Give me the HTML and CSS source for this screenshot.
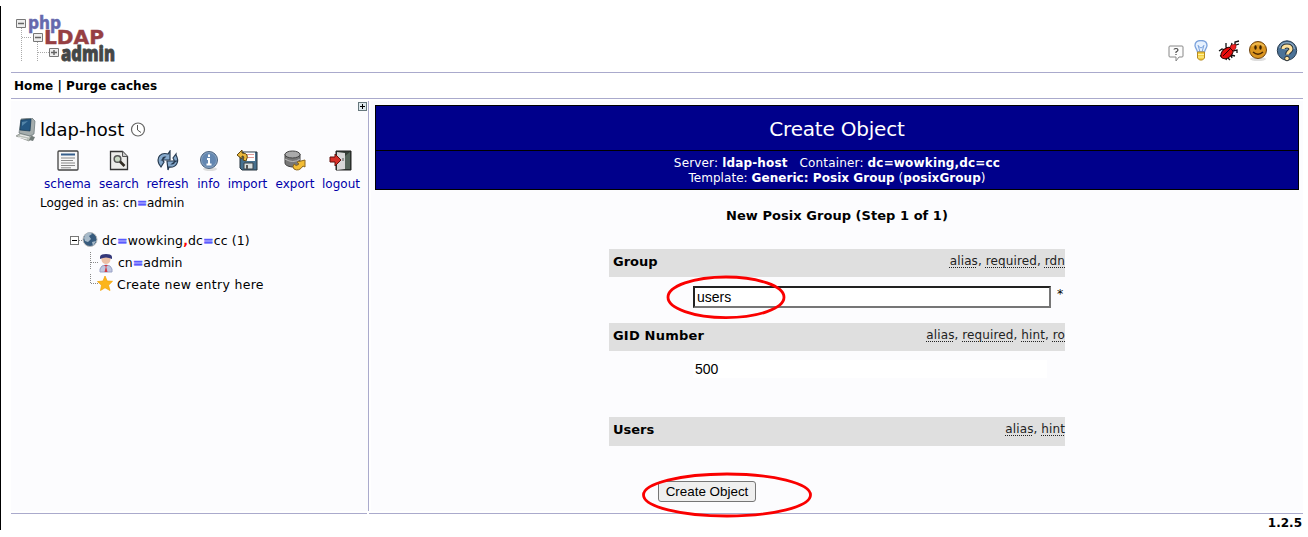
FILE: index.html
```html
<!DOCTYPE html>
<html lang="en">
<head>
<meta charset="utf-8">
<title>phpLDAPadmin</title>
<link rel="stylesheet" href="styles.css">
</head>
<body>
<div class="page">
  <header class="head">
    <svg class="logo" width="104" height="52" viewBox="0 0 104 52">
      <g stroke="#aaa" stroke-dasharray="1 1" fill="none"><path d="M6.500 15V48M7 24.500H17M22.500 29V48M23 39.500H34"/></g>
      <g class="logo-text">
        <text x="13" y="16" font-size="18" textLength="33" lengthAdjust="spacingAndGlyphs" fill="#6669ad" stroke="#6669ad" stroke-width=".5">php</text>
        <text x="29" y="31" font-size="20" textLength="60" lengthAdjust="spacingAndGlyphs" fill="#963f43" stroke="#963f43" stroke-width=".4">LDAP</text>
        <text class="logo-admin" x="46" y="48" font-size="21" textLength="54" lengthAdjust="spacingAndGlyphs" fill="#444747" stroke="#444747" stroke-width=".8">admin</text>
      </g>
      <g fill="#eee" stroke="#777"><path d="M1.500 6.500h9v8h-9zM18.500 20.500h9v8h-9zM34.500 35.500h9v8h-9z"/></g>
      <path d="M3 10.500h6M20 24.500h6M36 39.500h6M39 37v5" stroke="#666" stroke-width="1.500"/>
    </svg>
    <nav class="tools">
      <svg width="18" height="22" viewBox="0 0 18 22"><path d="M3 6h12q1 0 1 1v9q0 1-1 1h-3l-3 4v-4H3q-1 0-1-1V7q0-1 1-1z" fill="#fcfcfc" stroke="#888"/><path d="M7 9.500q0-1 2-1t2 1.500q0 1-2 2v1M9 14v1" fill="none" stroke="#444" stroke-width="1.200"/></svg>
      <svg width="16" height="22" viewBox="0 0 16 22"><path d="M4.500 12C4 9 2 8 2 5.500Q2 .5 8 .5t6 5C14 8 12 9 11.500 12z" fill="#e6f1ff" stroke="#7ba2dc" stroke-width="1.300"/><path d="M5 5l2 7M11 5l-2 7M5 6l3 2 3-2" stroke="#7ba2dc" fill="none"/><path d="M4.500 12h7v6l-2 2h-3l-2-2z" fill="#f4cf3f" stroke="#b58a22"/><path d="M5 14.500h6M5 17h6" stroke="#fff1a0"/></svg>
      <svg width="22" height="22" viewBox="0 0 22 22"><g stroke="#111" stroke-width="1.300" fill="none"><path d="M1 11l3-2 3 1M8 3v4l2 3M14 3l-1 4M17 5V2l4-1M18 5l3-1M14 11l5-1v3M2 16l4-1M8 20l1-3 3 3M14 18l-1-3 4 1"/></g><ellipse cx="9" cy="13" rx="7" ry="4.700" transform="rotate(-40 9 13)" fill="#e80d0d" stroke="#300"/><path d="M13 5l5-1v4l-3 3-3-3z" fill="#ee2020" stroke="#500" stroke-width=".5"/><path d="M5 16L12 9M11 7l4 4" stroke="#300"/></svg>
      <svg width="20" height="22" viewBox="0 0 20 22"><ellipse cx="10" cy="19" rx="8" ry="2" fill="#ddd"/><circle cx="10" cy="10" r="8.500" fill="#dc9620" stroke="#704511"/><path d="M4 6q6-5 12 0" stroke="#eeb84d" stroke-width="2" fill="none"/><path d="M5 12q5 4.500 10 0" fill="none" stroke="#4b2700" stroke-width="1.500"/><ellipse cx="7.500" cy="7.500" rx="1.200" ry="2.300" fill="#3b2100"/><ellipse cx="12.500" cy="7.500" rx="1.200" ry="2.300" fill="#3b2100"/></svg>
      <svg width="22" height="22" viewBox="0 0 22 22"><circle cx="11" cy="10.500" r="9.700" fill="#4b7297" stroke="#26394c"/><path d="M3 8q2-6 8-6 7 0 8 7-8 2-16-1z" fill="#91acc4"/><path d="M7 9q0-3 4-3t4 3.200c0 2-3.500 2.500-3.500 5.300" fill="none" stroke="#26303a" stroke-width="5"/><path d="M7 9q0-3 4-3t4 3.200c0 2-3.500 2.500-3.500 5.300" fill="none" stroke="#ffe19b" stroke-width="3"/><circle cx="11" cy="18.500" r="2.300" fill="#ffe19b" stroke="#26303a"/></svg>
    </nav>
  </header>
  <nav class="menu"><span>Home | Purge caches</span></nav>
  <div class="body">
    <aside class="side">
      <div class="expand"><svg width="9" height="9" viewBox="0 0 9 9"><rect x=".5" y=".5" width="8" height="8" fill="#dde8ec" stroke="#66777c"/><path d="M2 4.500h5M4.500 2v5" stroke="#000"/></svg></div>
      <div class="server">
        <svg width="22" height="24" viewBox="0 0 22 24"><path d="M1 18l5-3 12 3-4 5z" fill="#bac0b9" stroke="#858b86" stroke-width=".7"/><path d="M16 18l4 1-2 4-4-1z" fill="#707a78"/><path d="M6 1l11-1 3 3-1 13-4 2-11-3z" fill="#a5adad" stroke="#667276" stroke-width=".7"/><path d="M6 2l10-1-1 12-10-1z" fill="#245782" stroke="#163650" stroke-width=".7"/><path d="M7 4l6-1-6 5z" fill="#5485a8"/><path d="M3 19l9 2M5 17l9 2" stroke="#eee"/></svg>
        <span class="server-name">ldap-host</span>
        <svg width="16" height="16" viewBox="0 0 16 16"><circle cx="8" cy="7.500" r="6.500" fill="#fff" stroke="#666" stroke-width="1.200"/><path d="M7.500 3v5l3.500 2.500" stroke="#555" fill="none"/></svg>
      </div>
      <div class="actions">
        <a class="act schema"><svg width="24" height="22" viewBox="0 0 24 22"><path d="M3 1h18q1 0 1 1v17q0 1-1 1H3q-1 0-1-1V2q0-1 1-1z" fill="#f7f7f7" stroke="#444" stroke-width="1.300"/><path d="M5 4.500h14" stroke="#355e8c" stroke-width="2"/><path d="M5 8h14M5 10.500h12M5 13h14M5 15.500h14M5 17.800h10" stroke="#888"/></svg><span>schema</span></a>
        <a class="act search"><svg width="22" height="22" viewBox="0 0 22 22"><path d="M2.500 1.500h12l5 5v13h-17z" fill="#ececea" stroke="#333" stroke-width="1.300"/><path d="M14.500 1.500v5h5" fill="#ccc" stroke="#555"/><circle cx="9.500" cy="9" r="3.300" fill="#cad8c4" stroke="#555" stroke-width="1.500"/><path d="M12 11.500l4.500 4.500" stroke="#332d24" stroke-width="2.700"/></svg><span>search</span></a>
        <a class="act refresh"><svg width="24" height="22" viewBox="0 0 24 22"><g fill="#86a9cc" stroke="#263a50" stroke-width="1.200"><path d="M3 14C0 7 5 2 12 4l2-3v9H6l3-3C6 7 6 10 8 12l-3 5z"/><path d="M20 5c4 7 0 13-7 12l-1 3-1-9h9l-4 3c3 0 3-3 1-6l3-4z"/></g></svg><span>refresh</span></a>
        <a class="act info"><svg width="22" height="22" viewBox="0 0 22 22"><ellipse cx="12" cy="19" rx="7" ry="2" fill="#ddd"/><circle cx="11" cy="10" r="8.500" fill="#6487b1" stroke="#4f6580"/><circle cx="11" cy="10" r="7.500" fill="none" stroke="#91a9c2" stroke-width=".7"/><path d="M11 4.500v2.500M9 9h2v5M8.500 14.500h5" stroke="#fff" stroke-width="2" fill="none"/></svg><span>info</span></a>
        <a class="act import"><svg width="24" height="22" viewBox="0 0 24 22"><path d="M4 2h17v18H6l-2-2z" fill="#46708e" stroke="#25323c"/><path d="M8 2.500h11V11H8z" fill="#fff"/><path d="M9 4.500h9M9 7.500h9" stroke="#e19c99" stroke-width="1.200"/><path d="M8 13h9v6H8z" fill="#d8dedd" stroke="#39434a"/><path d="M10 15h2v4h-2z" fill="#555"/><path d="M1 5l5-5v3q8 0 4 8l-3-1q2-4-1-4v3z" fill="#eab83b" stroke="#5e4510"/></svg><span>import</span></a>
        <a class="act export"><svg width="24" height="22" viewBox="0 0 24 22"><path d="M2 4v9q0 3 7 4 8 0 8-4V4" fill="#777" stroke="#444"/><ellipse cx="9.500" cy="4.500" rx="7.500" ry="3.500" fill="#aaa" stroke="#444"/><path d="M2 9q8 5 15 0" stroke="#bbb" fill="none"/><path d="M11 14q2 3 5 0l-2-2 8-2v7l-2-1q-4 6-9 3-2-2 0-5z" fill="#f3bd34" stroke="#8b6720"/></svg><span>export</span></a>
        <a class="act logout"><svg width="24" height="22" viewBox="0 0 24 22"><path d="M7 1h15v19H7z" fill="#333c35" stroke="#222"/><path d="M8 2l8 1v16l-8 1z" fill="#d8d8d8"/><path d="M16 19V6l5-4v17z" fill="#55655a"/><path d="M1 7h5V4l6 6-6 6v-4H1z" fill="#d62f28" stroke="#63110d"/><path d="M14 8v3" stroke="#555"/></svg><span>logout</span></a>
      </div>
      <p class="logged">Logged in as: cn<b class="eq">=</b>admin</p>
      <div class="tree">
        <div class="node root"><svg width="29" height="20" viewBox="0 0 29 20"><rect x="1.500" y="6.500" width="8" height="8" fill="#fff" stroke="#777"/><path d="M3 10.500h5" stroke="#000"/><path d="M10 10.500h5" stroke="#888" stroke-dasharray="1 1"/><circle cx="21" cy="9.500" r="7" fill="#375b7d" stroke="#bbb"/><path d="M15 8q1-5 6-6l2 2-3 2 2 3-3 3-3-1zM23 12l4-1-3 5z" fill="#a7bac9"/></svg><span>dc<b class="eq">=</b>wowking<i>,</i>dc<b class="eq">=</b>cc (1)</span></div>
        <div class="node"><svg width="25" height="22" viewBox="0 0 25 22"><path d="M.5 1v18M1 11.500h7" stroke="#888" stroke-dasharray="1 1" fill="none"/><circle cx="16" cy="8.500" r="4.500" fill="#ecc0a6"/><path d="M10 8V6q0-3 6-3t6 3v2q-6-3-12 0z" fill="#343879"/><path d="M10 21v-3q1-4 6-4t6 4v3z" fill="#bfc6df" stroke="#9aa3c6"/><path d="M14 14h4l-2 2zM16 15l1.500 6h-3z" fill="#d43a43"/></svg><span>cn<b class="eq">=</b>admin</span></div>
        <div class="node create"><svg width="25" height="22" viewBox="0 0 25 22"><path d="M.5 1v10M1 10.500h7" stroke="#888" stroke-dasharray="1 1" fill="none"/><path d="M15 3l2.200 5 5.300.3-4 3.900 1.500 5.300-5-2.700-4.500 2.700 1-5.300-4-3.600 5.500-.6z" fill="#fcb51c" stroke="#f0a000" stroke-width=".7"/></svg><span>Create new entry here</span></div>
      </div>
    </aside>
    <main class="main">
      <section class="banner">
        <h1>Create Object</h1>
        <div class="sub"><div class="sub-one">Server: <b>ldap-host</b> &nbsp; Container: <b>dc=wowking,dc=cc</b></div><div class="sub-two">Template: <b>Generic: Posix Group</b> (<b>posixGroup</b>)</div></div>
      </section>
      <h2><span>New Posix Group (Step 1 of 1)</span></h2>
      <form class="form">
        <div class="bar"><b>Group</b><span class="hints"><u>alias</u>, <u>required</u>, <u>rdn</u></span></div>
        <div class="value"><input class="text" value="users"><span class="star">*</span></div>
        <div class="bar"><b class="l-gid">GID Number</b><span class="hints"><u>alias</u>, <u>required</u>, <u>hint</u>, <u>ro</u></span></div>
        <div class="value gid"><span class="ro">500</span></div>
        <div class="bar last"><b>Users</b><span class="hints"><u>alias</u>, <u>hint</u></span></div>
        <button class="submit" type="button">Create Object</button>
      </form>
    </main>
  </div>
  <footer class="foot"><div class="line-a"></div><div class="line-b"></div></footer>
  <div class="version">1.2.5</div>
</div>
<svg class="marks" width="1308" height="537" viewBox="0 0 1308 537"><g fill="none" stroke="#fa0000" stroke-width="2.800"><ellipse cx="726" cy="297.300" rx="58" ry="20.300"/><ellipse cx="727" cy="495" rx="83.500" ry="21"/></g></svg>
</body>
</html>
```
FILE: styles.css
```css
* { box-sizing: border-box; }
body { margin: 0; width: 1308px; height: 537px; overflow: hidden; background: #fff; color: #000; font: 12.5px/15px "DejaVu Sans", Verdana, sans-serif; }
svg { display: block; flex: none; }
.page { height: 524px; margin-top: 6px; padding: 0 5px 0 10px; border-left: 1px solid #000; }
.head { height: 67px; display: flex; justify-content: space-between; align-items: flex-start; padding: 7px 5px 0 4px; border-bottom: 1px solid #aaaacc; }
.logo { overflow: visible; }
.logo-text { font-family: "DejaVu Sans", sans-serif; font-weight: bold; }
.logo-admin { font-family: "Open Sans", sans-serif; font-weight: 800; }
.tools { display: flex; justify-content: space-between; width: 131px; padding-top: 27px; }
.menu { height: 26px; border-bottom: 1px solid #aaaacc; padding: 6px 3px; font-size: 12px; font-weight: bold; letter-spacing: .06px; }
.body { display: flex; height: 410px; margin-top: 2px; }
.side { width: 358px; background: #fcfcfe; border-right: 1px solid #aaaacc; flex: none; }
.expand { display: flex; justify-content: flex-end; height: 16px; padding: 1px 1px 0 0; }
.server { display: flex; align-items: center; height: 26px; padding-left: 4px; gap: 3px; }
.server svg:last-child { margin-left: 3px; }
.server-name { font-size: 18px; line-height: 24px; }
.actions { display: flex; padding: 7px 0 0 32px; height: 52px; }
.act { display: flex; flex-direction: column; align-items: center; gap: 5px; color: #0000aa; font-size: 12px; white-space: nowrap; }
.schema { width: 49px; } .search { width: 54px; } .refresh { width: 43px; } .info { width: 39px; } .import { width: 39px; } .export { width: 56px; } .logout { width: 36px; }
.logged { margin: 0; padding: 1px 0 0 29px; font-size: 12px; letter-spacing: -.08px; }
.eq { color: #5b5bff; font-weight: bold; -webkit-text-stroke: .5px #5b5bff; }
.node i { color: #f00; font-style: normal; font-weight: bold; }
.tree { padding: 18px 0 0 79px; }
.node { display: flex; align-items: center; height: 22px; gap: 3px; }
.root { margin-left: -21px; gap: 4px; letter-spacing: .12px; }
.create { gap: 2px; letter-spacing: .3px; }
.main { flex: 1; margin-left: 2px; background: #fcfcfe; padding: 4px 4px 0 4px; }
.banner { background: #00008b; color: #fff; border: 1px solid #000; height: 85px; text-align: center; }
.banner h1 { margin: 0; height: 45px; border-bottom: 1px solid #000; font-size: 20px; line-height: 46px; font-weight: normal; letter-spacing: -.2px; }
.sub { padding-top: 5px; font-size: 12px; }
.sub-one { letter-spacing: .16px; }
.sub-two { letter-spacing: .05px; }
h2 { margin: 18px 0 26px; font-size: 13px; line-height: 15px; text-align: center; letter-spacing: .04px; }
.form { width: 456px; margin-left: 234px; }
.bar { height: 28px; background: #dfdfdf; display: flex; justify-content: space-between; padding: 5px 0 0 4px; font-size: 13px; }
.l-gid { letter-spacing: .2px; }
.hints { font-size: 12px; line-height: 14px; color: #222; letter-spacing: .1px; }
.hints u { text-decoration: underline dotted #222 1px; text-underline-offset: 2px; text-decoration-skip-ink: none; }
.value { display: flex; height: 46px; padding: 9px 0 0 84px; }
.text { width: 358px; height: 22px; border: 2px inset #767676; padding: 1px 2px; background: #fff; font: 14px "Liberation Sans", Arial, sans-serif; color: #000; }
.star { margin: 0 0 0 6px; }
.gid { height: 66px; }
.ro { width: 354px; height: 18px; padding-left: 2px; background: #fff; font: 14px/18px "Liberation Sans", Arial, sans-serif; }
.last { height: 29px; }
.submit { display: block; margin: 35px 0 0 49px; width: 98px; height: 21px; padding: 0; border: 1px solid #767676; border-radius: 3px; background: #efefef; color: #000; font: 13.4px/18px "Liberation Sans", Arial, sans-serif; white-space: nowrap; }
.foot { display: flex; margin-top: 2px; gap: 2px; }
.line-a { width: 356px; border-top: 1px solid #aaaacc; }
.line-b { flex: 1; border-top: 1px solid #aaaacc; }
.version { text-align: right; font-size: 12px; font-weight: bold; padding: 2px 1px 0 0; }
.marks { position: absolute; left: 0; top: 0; pointer-events: none; }
```
